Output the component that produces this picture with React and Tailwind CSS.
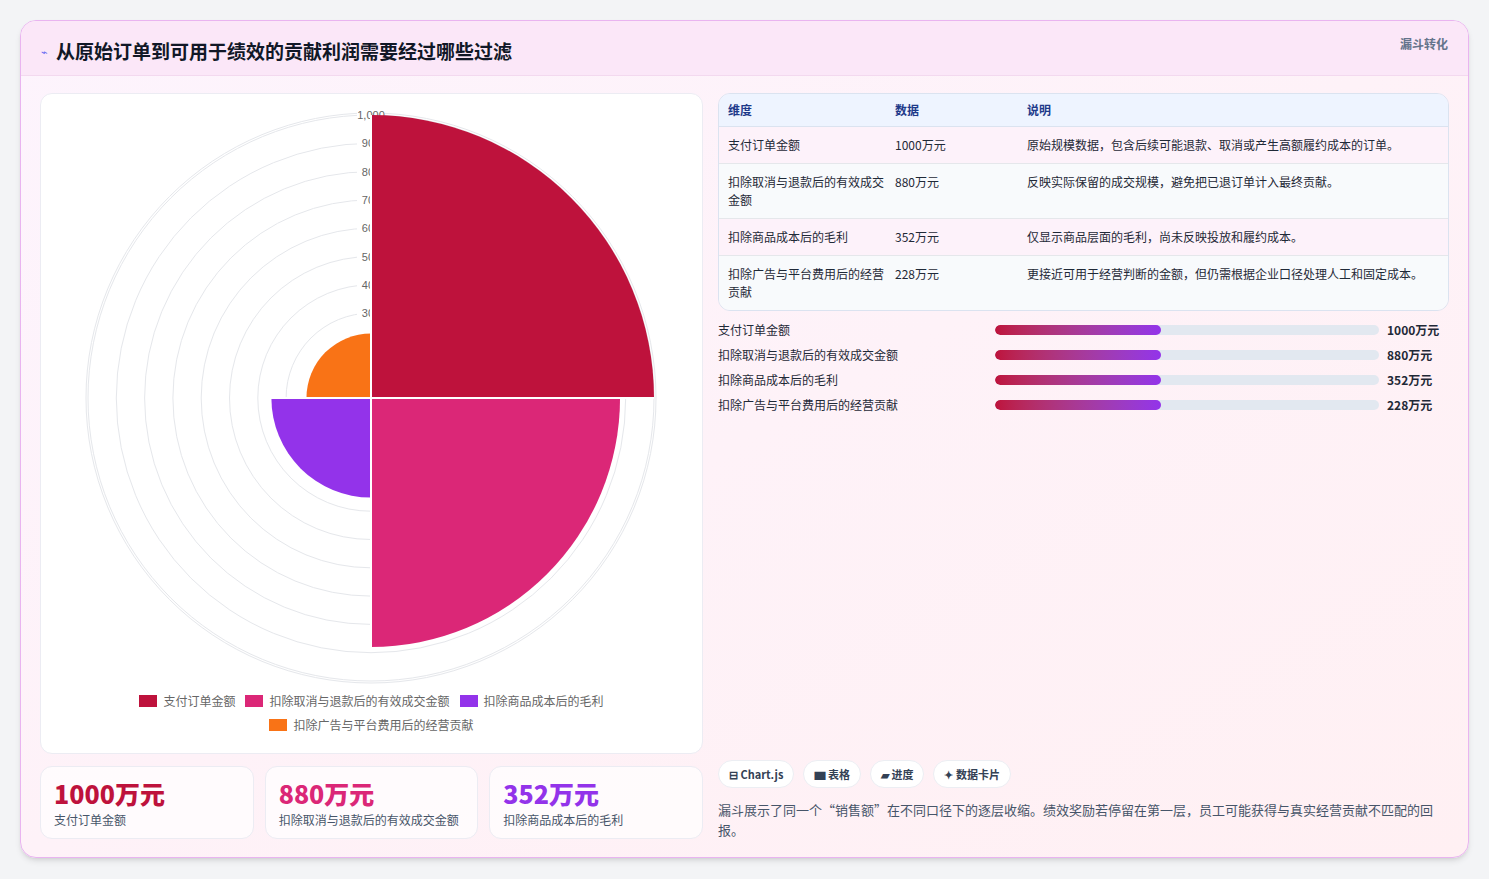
const F = { fontFamily: '"Noto Sans CJK SC", "Noto Sans", sans-serif' };

function arc(cx, cy, r, a0, a1) {
  const rad = (a) => (a * Math.PI) / 180;
  const x0 = cx + r * Math.cos(rad(a0)), y0 = cy + r * Math.sin(rad(a0));
  const x1 = cx + r * Math.cos(rad(a1)), y1 = cy + r * Math.sin(rad(a1));
  return `M${cx},${cy} L${x0},${y0} A${r},${r} 0 0 1 ${x1},${y1} Z`;
}

function Polar() {
  const cx = 330, cy = 302, k = 0.283;
  const rings = [100, 200, 300, 400, 500, 600, 700, 800, 900, 1000];
  const labels = [300, 400, 500, 600, 700, 800, 900, 1000];
  return (
    <svg width="662" height="590" viewBox="0 0 662 590">
      {rings.map((v) => (
        <circle key={v} cx={cx} cy={cy} r={v * k} fill="none" stroke="#e5e7eb" strokeWidth="1" />
      ))}
      <circle cx={cx} cy={cy} r={285} fill="none" stroke="#e5e7eb" strokeWidth="1" />
      {labels.map((v) => (
        <g key={v}>
          <rect x={cx - 14} y={cy - v * k - 6} width="28" height="12" fill="white" />
          <text x={cx} y={cy - v * k + 4} textAnchor="middle" fontSize="11" fill="#666" fontFamily="Liberation Sans, sans-serif">
            {v === 1000 ? '1,000' : v}
          </text>
        </g>
      ))}
      <path d={arc(cx, cy, 1000 * k, -90, 0)} fill="#be123c" />
      <path d={arc(cx, cy, 880 * k, 0, 90)} fill="#db2777" />
      <path d={arc(cx, cy, 352 * k, 90, 180)} fill="#9333ea" />
      <path d={arc(cx, cy, 228 * k, 180, 270)} fill="#f97316" />
      <g stroke="white" strokeWidth="2">
        <line x1={cx} y1={cy} x2={cx} y2={cy - 283} />
        <line x1={cx} y1={cy} x2={cx + 283} y2={cy} />
        <line x1={cx} y1={cy} x2={cx} y2={cy + 250} />
        <line x1={cx} y1={cy} x2={cx - 100} y2={cy} />
      </g>
    </svg>
  );
}

const rows = [
  ['支付订单金额', '1000万元', '原始规模数据，包含后续可能退款、取消或产生高额履约成本的订单。'],
  ['扣除取消与退款后的有效成交金额', '880万元', '反映实际保留的成交规模，避免把已退订单计入最终贡献。'],
  ['扣除商品成本后的毛利', '352万元', '仅显示商品层面的毛利，尚未反映投放和履约成本。'],
  ['扣除广告与平台费用后的经营贡献', '228万元', '更接近可用于经营判断的金额，但仍需根据企业口径处理人工和固定成本。'],
];

export default function App() {
  return (
    <div style={F} className="w-[1489px] h-[879px] bg-[#f3f4f6] p-[20px] pb-[21px]">
      <div className="h-full rounded-[16px] border border-[#e9b4f0] bg-gradient-to-br from-[#fdf4fd] to-[#fff0f3] shadow-md overflow-hidden flex flex-col">
        <div className="h-[55px] bg-[#fbe7f8] border-b border-[#f3d9ef] flex items-start justify-between px-[20px]">
          <div className="flex items-center gap-[8px] mt-[16px]">
            <span className="text-[#6366f1] text-[11px]">⌁</span>
            <span className="text-[19px] font-bold text-[#111827]">从原始订单到可用于绩效的贡献利润需要经过哪些过滤</span>
          </div>
          <span className="mt-[14px] text-[12px] font-semibold text-[#64748b]">漏斗转化</span>
        </div>
        <div className="flex-1 flex gap-[15px] px-[19px] pt-[17px] pb-[18px]">
          <div className="w-[663px] flex flex-col gap-[12px]">
            <div className="h-[661px] bg-white rounded-[12px] border border-[#ececf3] flex flex-col items-center pt-[2px]">
              <Polar />
              <div className="mt-[6px] flex flex-col items-center gap-[6px] text-[12px] text-[#666]">
                <div className="flex gap-[10px]">
                  {[['#be123c', '支付订单金额'], ['#db2777', '扣除取消与退款后的有效成交金额'], ['#9333ea', '扣除商品成本后的毛利']].map(([c, t]) => (
                    <span key={t} className="flex items-center gap-[6px]"><span className="w-[18px] h-[12px]" style={{ background: c }} />{t}</span>
                  ))}
                </div>
                <span className="flex items-center gap-[6px]"><span className="w-[18px] h-[12px] bg-[#f97316]" />扣除广告与平台费用后的经营贡献</span>
              </div>
            </div>
            <div className="flex gap-[11px]">
              {[['1000万元', '支付订单金额', '#be123c'], ['880万元', '扣除取消与退款后的有效成交金额', '#db2777'], ['352万元', '扣除商品成本后的毛利', '#9333ea']].map(([v, l, c]) => (
                <div key={l} className="flex-1 h-[73px] bg-white/70 border border-[#ececf3] rounded-[12px] px-[13px] pt-[8px]">
                  <div className="text-[25px] font-extrabold leading-[36px]" style={{ color: c }}>{v}</div>
                  <div className="text-[12px] text-[#475569]">{l}</div>
                </div>
              ))}
            </div>
          </div>
          <div className="flex-1 flex flex-col">
            <div className="rounded-[12px] border border-[#dbe3f0] overflow-hidden text-[12px] text-[#1f2937]">
              <div className="flex bg-[#eef4ff] h-[33px] items-center font-semibold text-[#1e3a8a] border-b border-[#dbe3f0]">
                <div className="w-[176px] pl-[9px]">维度</div><div className="w-[132px]">数据</div><div>说明</div>
              </div>
              {rows.map((r, i) => (
                <div key={i} className={`flex py-[9px] leading-[18px] ${i % 2 === 0 ? 'bg-[#fdf2fa]' : 'bg-[#f8fafc]'} ${i < 3 ? 'border-b border-[#e5e7eb]' : ''}`}>
                  <div className="w-[176px] pl-[9px] pr-[8px]">{r[0]}</div><div className="w-[132px]">{r[1]}</div><div className="flex-1">{r[2]}</div>
                </div>
              ))}
            </div>
            <div className="mt-[10px] flex flex-col gap-[7px] text-[12px] text-[#1f2937]">
              {rows.map((r) => (
                <div key={r[0]} className="flex items-center h-[18px]">
                  <div className="w-[277px]">{r[0]}</div>
                  <div className="w-[384px] h-[10px] rounded-full bg-[#e2e8f0] overflow-hidden">
                    <div className="w-[166px] h-full rounded-full bg-gradient-to-r from-[#be123c] to-[#9333ea]" />
                  </div>
                  <div className="ml-[8px] font-bold">{r[1]}</div>
                </div>
              ))}
            </div>
            <div className="mt-auto flex gap-[9px] text-[11px] font-semibold text-[#334155]">
              {['⊟ Chart.js', '▆ 表格', '▰ 进度', '✦ 数据卡片'].map((t) => (
                <span key={t} className="h-[28px] px-[10px] rounded-full bg-white border border-[#eceef3] flex items-center">{t}</span>
              ))}
            </div>
            <div className="mt-[12px] text-[13px] text-[#475569]">漏斗展示了同一个“销售额”在不同口径下的逐层收缩。绩效奖励若停留在第一层，员工可能获得与真实经营贡献不匹配的回报。</div>
          </div>
        </div>
      </div>
    </div>
  );
}
